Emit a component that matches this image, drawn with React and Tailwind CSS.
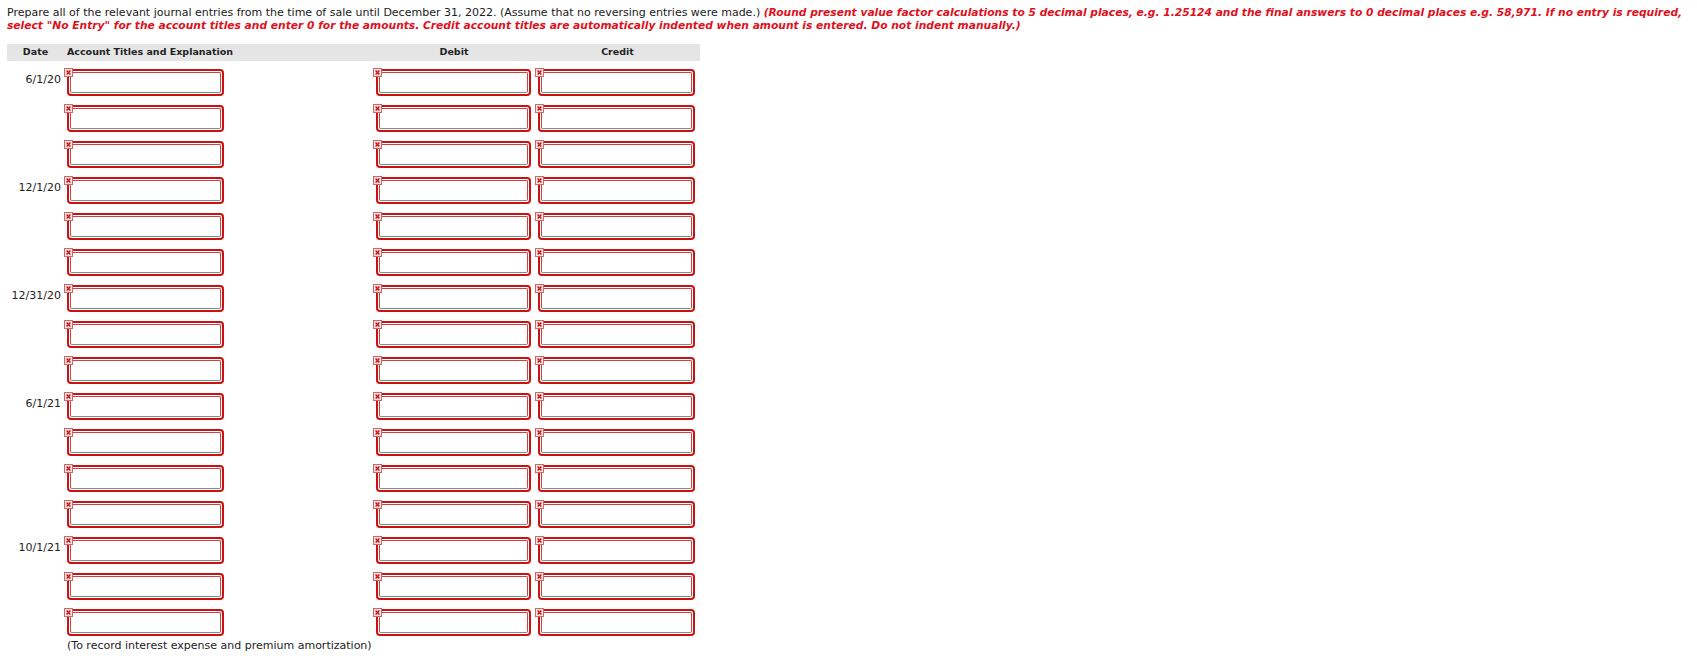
const rows = [
  { date: "6/1/20" },
  { date: "" },
  { date: "" },
  { date: "12/1/20" },
  { date: "" },
  { date: "" },
  { date: "12/31/20" },
  { date: "" },
  { date: "" },
  { date: "6/1/21" },
  { date: "" },
  { date: "" },
  { date: "" },
  { date: "10/1/21" },
  { date: "" },
  { date: "" },
];

function ErrIcon() {
  return (
    <svg width="9" height="9" viewBox="0 0 9 9" className="absolute left-0 top-0">
      <rect x="0.5" y="0.5" width="8" height="8" fill="#fbe1e1" stroke="#c86a6a" />
      <path d="M2.6 2.6 L6.4 6.4 M6.4 2.6 L2.6 6.4" stroke="#cc1111" strokeWidth="1.4" />
    </svg>
  );
}

function Field({ width = "w-[157px]" }) {
  return (
    <div className="relative pl-[3px] pt-[1px] h-[28px]">
      <div className={`${width} h-[27px] border-2 border-[#cc1111] rounded-[4px] bg-white p-[1px]`}>
        <div className="h-full border border-[#c24848] border-b-[#8a8a8a] rounded-[2px]"></div>
      </div>
      <ErrIcon />
    </div>
  );
}

export default function App() {
  return (
    <div
      className="min-h-screen bg-white pl-[7px] pt-[6px] text-[11px] text-[#1a1a1a]"
      style={{ fontFamily: '"DejaVu Sans", Verdana, sans-serif' }}
    >
      <p className="leading-[13px] whitespace-nowrap">
        Prepare all of the relevant journal entries from the time of sale until December 31, 2022. (Assume that no reversing entries were made.){" "}
        <span className="font-bold italic text-[10.7px] text-[#df1020]">
          (Round present value factor calculations to 5 decimal places, e.g. 1.25124 and the final answers to 0 decimal places e.g. 58,971. If no entry is required,
          <br />
          select "No Entry" for the account titles and enter 0 for the amounts. Credit account titles are automatically indented when amount is entered. Do not indent manually.)
        </span>
      </p>

      <div className="mt-[12px] w-[693px]">
        <div className="flex h-[17px] items-center bg-[#e5e5e5] text-[9.5px] font-bold text-[#222]">
          <div className="w-[57px] text-center">Date</div>
          <div className="w-[309px] pl-[3px]">Account Titles and Explanation</div>
          <div className="w-[162px] text-center">Debit</div>
          <div className="w-[165px] text-center">Credit</div>
        </div>

        <div className="mt-[7px] flex flex-col gap-[8px]">
          {rows.map((r, i) => (
            <div key={i} className="flex h-[28px]">
              <div className="w-[57px] pr-[3px] pt-[5px] text-right leading-[13px] text-[#222]">{r.date}</div>
              <Field />
              <div className="w-[149px]"></div>
              <Field width="w-[155px]" />
              <div className="w-[4px]"></div>
              <Field />
            </div>
          ))}
        </div>

        <div className="mt-[3px] pl-[60px] leading-[13px] text-[#222]">
          (To record interest expense and premium amortization)
        </div>
      </div>
    </div>
  );
}
